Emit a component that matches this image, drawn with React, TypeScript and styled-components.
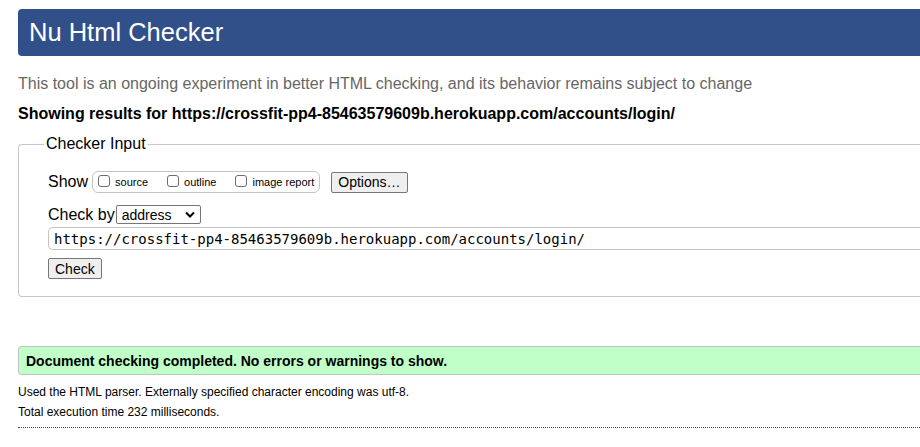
import styled, { createGlobalStyle } from "styled-components";

const Global = createGlobalStyle`
  html, body {
    margin: 0;
    padding: 0;
    background: #fff;
    overflow: hidden;
  }
  body {
    font-family: "Liberation Sans", Arial, sans-serif;
    color: #000;
  }
`;

const Page = styled.div`
  width: 1200px;
  padding: 9px 0 0 18px;
`;

const Header = styled.h1`
  margin: 0;
  height: 47px;
  display: flex;
  align-items: center;
  padding-left: 11px;
  background: #31508a;
  color: #fff;
  font-size: 25.5px;
  font-weight: normal;
  border-radius: 4px 0 0 4px;
`;

const Intro = styled.p`
  margin: 18px 0 0;
  font-size: 16px;
  color: #666;
  line-height: 20px;
`;

const Showing = styled.p`
  margin: 10px 0 0;
  font-size: 16px;
  font-weight: bold;
  line-height: 20px;
`;

const InputBox = styled.fieldset`
  margin: 12px 0 0;
  padding: 19px 0 17px 29px;
  border: 1px solid #c8c8c8;
  border-right: none;
  border-radius: 4px 0 0 4px;
  min-height: 0;
`;

const Legend = styled.legend`
  font-size: 16px;
  padding: 0 2px;
  margin-left: -4px;
  line-height: 16px;
`;

const Row = styled.div<{ $mt?: number }>`
  display: flex;
  align-items: center;
  margin-top: ${(p) => p.$mt ?? 0}px;
  font-size: 16px;
`;

const Label = styled.span<{ $gap: number }>`
  margin-right: ${(p) => p.$gap}px;
`;

const Group = styled.div`
  display: flex;
  align-items: center;
  height: 20px;
  border: 1px solid #c4c4c4;
  border-radius: 6px;
  padding: 0 5px 0 5px;
  margin-right: 11px;
`;

const Opt = styled.label<{ $gap?: number }>`
  display: flex;
  align-items: center;
  font-size: 11px;
  margin-left: ${(p) => p.$gap ?? 0}px;
`;

const Box = styled.span`
  width: 10px;
  height: 10px;
  border: 1px solid #6d6d6d;
  border-radius: 3px;
  margin-right: 5px;
  margin-top: -3px;
  background: #fff;
`;

const Button = styled.button`
  font-family: "Liberation Sans", Arial, sans-serif;
  font-size: 14px;
  height: 21px;
  padding: 0 6px;
  border: 1px solid #767676;
  border-radius: 2px;
  background: #efefef;
  color: #000;
`;

const Select = styled.div`
  display: flex;
  align-items: center;
  justify-content: space-between;
  width: 73px;
  height: 17px;
  border: 1px solid #767676;
  border-radius: 2px;
  padding: 0 5px 0 5px;
  font-size: 14px;
  box-sizing: content-box;
`;

const UrlField = styled.div`
  margin-top: 3px;
  height: 21px;
  border: 1px solid #c4c4c4;
  border-right: none;
  border-radius: 5px 0 0 5px;
  display: flex;
  align-items: center;
  padding-left: 5px;
  font-family: "DejaVu Sans Mono", monospace;
  font-size: 14px;
`;

const Success = styled.p`
  margin: 49px 0 0;
  height: 27px;
  display: flex;
  align-items: center;
  padding-left: 7px;
  background: #c0ffc8;
  border: 1px solid #c2c2c2;
  border-right: none;
  border-radius: 4px 0 0 4px;
  font-size: 14px;
  font-weight: bold;
`;

const Note = styled.p<{ $mt: number }>`
  margin: ${(p) => p.$mt}px 0 0;
  font-size: 12px;
  line-height: 14px;
`;

const Rule = styled.hr`
  margin: 8px 0 0;
  border: none;
  border-top: 1px dotted #444;
`;

export default function App() {
  return (
    <>
      <Global />
      <Page>
        <Header>Nu Html Checker</Header>
        <Intro>
          This tool is an ongoing experiment in better HTML checking, and its
          behavior remains subject to change
        </Intro>
        <Showing>
          Showing results for
          https://crossfit-pp4-85463579609b.herokuapp.com/accounts/login/
        </Showing>
        <InputBox>
          <Legend>Checker Input</Legend>
          <Row>
            <Label $gap={4}>Show</Label>
            <Group>
              <Opt>
                <Box />
                source
              </Opt>
              <Opt $gap={19}>
                <Box />
                outline
              </Opt>
              <Opt $gap={19}>
                <Box />
                image report
              </Opt>
            </Group>
            <Button>Options…</Button>
          </Row>
          <Row $mt={12}>
            <Label $gap={1}>Check by</Label>
            <Select>
              address
              <svg width="10" height="7" viewBox="0 0 10 7">
                <path d="M1 1.5 L5 5.5 L9 1.5" fill="none" stroke="#000" strokeWidth="2" />
              </svg>
            </Select>
          </Row>
          <UrlField>https://crossfit-pp4-85463579609b.herokuapp.com/accounts/login/</UrlField>
          <Row $mt={8}>
            <Button>Check</Button>
          </Row>
        </InputBox>
        <Success>Document checking completed. No errors or warnings to show.</Success>
        <Note $mt={10}>Used the HTML parser. Externally specified character encoding was utf-8.</Note>
        <Note $mt={6}>Total execution time 232 milliseconds.</Note>
        <Rule />
      </Page>
    </>
  );
}
